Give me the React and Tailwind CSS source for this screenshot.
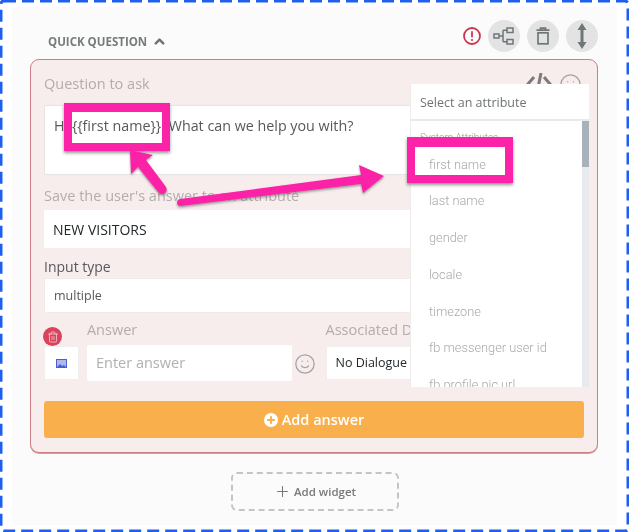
import React from "react";
import { Trash2, Smile, ChevronUp, Plus } from "lucide-react";

const items = ["first name", "last name", "gender", "locale", "timezone", "fb messenger user id", "fb profile pic url"];

export default function App() {
  return (
    <div className="relative h-[532px] w-[629px] overflow-hidden bg-white font-['Open_Sans',sans-serif]">
      <div className="h-full w-full px-[12px] py-[7px] blur-[0.4px]">
        <div className="h-[518px] bg-[#fbfbfb] pl-[18px] pr-[19px] pt-[13px]">
          {/* header */}
          <div className="flex h-[39px] items-start pl-[18px]">
            <div className="mt-[14px] flex items-center gap-[5px] text-[11.5px] font-bold leading-[12px] text-[#777b7c]">
              QUICK QUESTION
              <ChevronUp size={15} strokeWidth={4} className="text-[#6f7374]" />
            </div>
            <div className="ml-auto flex items-center gap-[7px]">
              <svg width="20" height="20" viewBox="0 0 20 20" className="-mr-[1px]">
                <circle cx="10" cy="10" r="8" fill="none" stroke="#c8384f" strokeWidth="1.8" />
                <rect x="9.1" y="5" width="1.8" height="6.5" rx="0.9" fill="#c8384f" />
                <circle cx="10" cy="14" r="1.1" fill="#c8384f" />
              </svg>
              <div className="flex h-[32px] w-[32px] items-center justify-center rounded-full bg-[#e3e3e3]">
                <svg width="22" height="18" viewBox="0 0 22 18" fill="none" stroke="#6e7778" strokeWidth="1.5">
                  <rect x="1" y="7" width="5" height="4" />
                  <rect x="14" y="1" width="6" height="4.5" />
                  <rect x="14" y="12.5" width="6" height="4.5" />
                  <path d="M6 9h4M10 3.2v11.6M10 3.2h4M10 14.8h4" />
                </svg>
              </div>
              <div className="flex h-[32px] w-[32px] items-center justify-center rounded-full bg-[#e3e3e3]">
                <svg width="16" height="18" viewBox="0 0 16 18" fill="none" stroke="#6e7778" strokeWidth="1.7">
                  <path d="M1.500 3.200h13M5.500 3V1.200h5V3" />
                  <rect x="3" y="5.800" width="10" height="11" />
                </svg>
              </div>
              <div className="flex h-[32px] w-[32px] items-center justify-center rounded-full bg-[#e3e3e3]">
                <svg width="12" height="26" viewBox="0 0 12 26" fill="#6e7778">
                  <path d="M6 0l4.500 7H7.500v12h3L6 26l-4.500-7h3V7h-3z" />
                </svg>
              </div>
            </div>
          </div>

          {/* card */}
          <div className="relative h-[394px] rounded-[9px] border border-[#cd7f88] bg-[#f8eded] px-[13px] shadow-[0_1px_0_#d99aa1]">
            <div className="pt-[14px] text-[14.5px] leading-[20px] text-[#b3adad]">Question to ask</div>
            <div className="mt-[11px] h-[70px] border border-[#e9e4e4] bg-white pl-[9px] pt-[10px] text-[14.3px] leading-[20px] text-[#55595c]">
              Hi {"{{first name}}"}! What can we help you with?
            </div>
            <div className="mt-[11px] text-[14.5px] leading-[20px] text-[#b3adad]">Save the user's answer to an attribute</div>
            <div className="mt-[4px] flex h-[38px] items-center bg-white pl-[9px] text-[14px] text-[#23282b]">NEW VISITORS</div>
            <div className="mt-[9px] text-[14px] leading-[20px] text-[#55595c]">Input type</div>
            <div className="mt-[1px] flex h-[35px] items-center border border-[#f0eaea] bg-white pl-[9px] pt-[2px] text-[12.5px] text-[#55595c]">multiple</div>

            {/* answer row */}
            <div className="mt-[7px] flex items-start">
              <div className="relative mt-[26px] flex h-[34px] w-[35px] items-center justify-center border border-[#f3eeee] bg-white">
                <div className="absolute -left-[2px] -top-[20px] flex h-[19px] w-[19px] items-center justify-center rounded-full bg-[#d9435c]">
                  <Trash2 size={12} strokeWidth={1.5} className="text-[#f7d5da]" />
                </div>
                <svg width="11" height="9" viewBox="0 0 11 9">
                  <rect width="11" height="9" fill="#4a5fd0" />
                  <rect x="1" y="1" width="9" height="7" fill="#aeb8ee" />
                  <path d="M1 8l3-3 2 2 2-1 2 2z" fill="#4a5fd0" />
                </svg>
              </div>
              <div className="ml-[8px] w-[205px]">
                <div className="text-[14.5px] leading-[20px] text-[#b3adad]">Answer</div>
                <div className="mt-[5px] flex h-[36px] items-center rounded-[2px] bg-white pl-[9px] text-[14.5px] text-[#b0b0b0]">Enter answer</div>
              </div>
              <Smile size={22} strokeWidth={1.4} className="ml-[2px] mt-[33px] text-[#a3a3a3]" />
              <div className="ml-[10px] w-[259px]">
                <div className="whitespace-nowrap text-[14.5px] leading-[20px] text-[#b3adad]">Associated Dialogue</div>
                <div className="mt-[6px] flex h-[34px] items-center border border-[#f3eeee] bg-white pl-[9px] text-[12.5px] text-[#23282b]">No Dialogue</div>
              </div>
            </div>

            <button className="mt-[20px] flex h-[37px] w-full items-center justify-center gap-[4px] rounded-[3px] bg-[#f9af4b] text-[14.5px] font-semibold text-white">
              <svg width="14" height="14" viewBox="0 0 14 14">
                <circle cx="7" cy="7" r="7" fill="#fff" />
                <path d="M7 3.200v7.600M3.200 7h7.600" stroke="#f9af4b" strokeWidth="2" />
              </svg>
              Add answer
            </button>

            {/* icons behind the dropdown */}
            <svg width="26" height="22" viewBox="0 0 26 22" className="absolute right-[45px] top-[13px]" fill="none" stroke="#7d7a7a" strokeWidth="3">
              <path d="M8 4L2 11l6 7M18 4l6 7-6 7M15 0l-4 20" />
            </svg>
            <Smile size={23} strokeWidth={1.3} className="absolute right-[15px] top-[13px] text-[#a3a3a3]" />

            {/* attribute dropdown */}
            <div className="absolute left-[379px] top-[24px] w-[179px] border-l border-[#f0ecec] bg-white">
              <div className="flex h-[37px] items-center border-b-2 border-[#e8eaf0] pl-[9px] pt-[3px] text-[12.5px] text-[#6f7375]">Select an attribute</div>
              <div className="flex h-[266px] overflow-hidden">
                <div className="flex-1 overflow-hidden pl-[18px] font-['Roboto',sans-serif] font-light">
                  <div className="-ml-[9px] h-[25px] pt-[12px] text-[10px] leading-none text-[#9a9a9a]">System Attributes</div>
                  {items.map((t) => (
                    <div key={t} className="flex h-[36.7px] items-center text-[12.8px] text-[#a9a9a9]">{t}</div>
                  ))}
                </div>
                <div className="w-[7px] bg-[#e8eaee]">
                  <div className="h-[46px] bg-[#a8b2ba]" />
                </div>
              </div>
            </div>
          </div>

          {/* add widget */}
          <div className="ml-[201px] mt-[19px] flex h-[39px] w-[168px] items-center justify-center gap-[3px] rounded-[6px] border-2 border-dashed border-[#c4c4c4] text-[11.5px] font-semibold text-[#77797a]">
            <Plus size={17} strokeWidth={1.5} />
            Add widget
          </div>
        </div>

        {/* annotations */}
        <div className="absolute left-[64px] top-[103px] h-[48px] w-[106px] border-[8px] border-t-[9px] border-[#fb23a8] shadow-[0_2px_3px_rgba(60,60,60,0.55)]" />
        <div className="absolute left-[407px] top-[137px] h-[46px] w-[106px] border-[8px] border-t-[10px] border-[#fb23a8] shadow-[0_2px_3px_rgba(60,60,60,0.55)]" />
        <svg width="629" height="532" className="pointer-events-none absolute left-0 top-0">
          <defs>
            <filter id="s" x="-10%" y="-30%" width="120%" height="160%">
              <feDropShadow dx="0" dy="1.500" stdDeviation="1" floodColor="#555" floodOpacity="0.6" />
            </filter>
          </defs>
          <g filter="url(#s)" fill="#fb23a8">
            <path d="M180 199L361 175L359 165L384 176L363 193L361 184L181 206Q177 206 177 202.500Q177 199.500 180 199Z" />
            <path d="M130 150L153 155L146 160L166 187Q168 191 164.500 193.500Q161 195.500 158.500 192.500L138 167L131 174Z" />
          </g>
          <rect x="1" y="1" width="627" height="530" rx="3" fill="none" stroke="#1f5ff0" strokeWidth="3" strokeDasharray="12 6" />
        </svg>
      </div>
    </div>
  );
}
